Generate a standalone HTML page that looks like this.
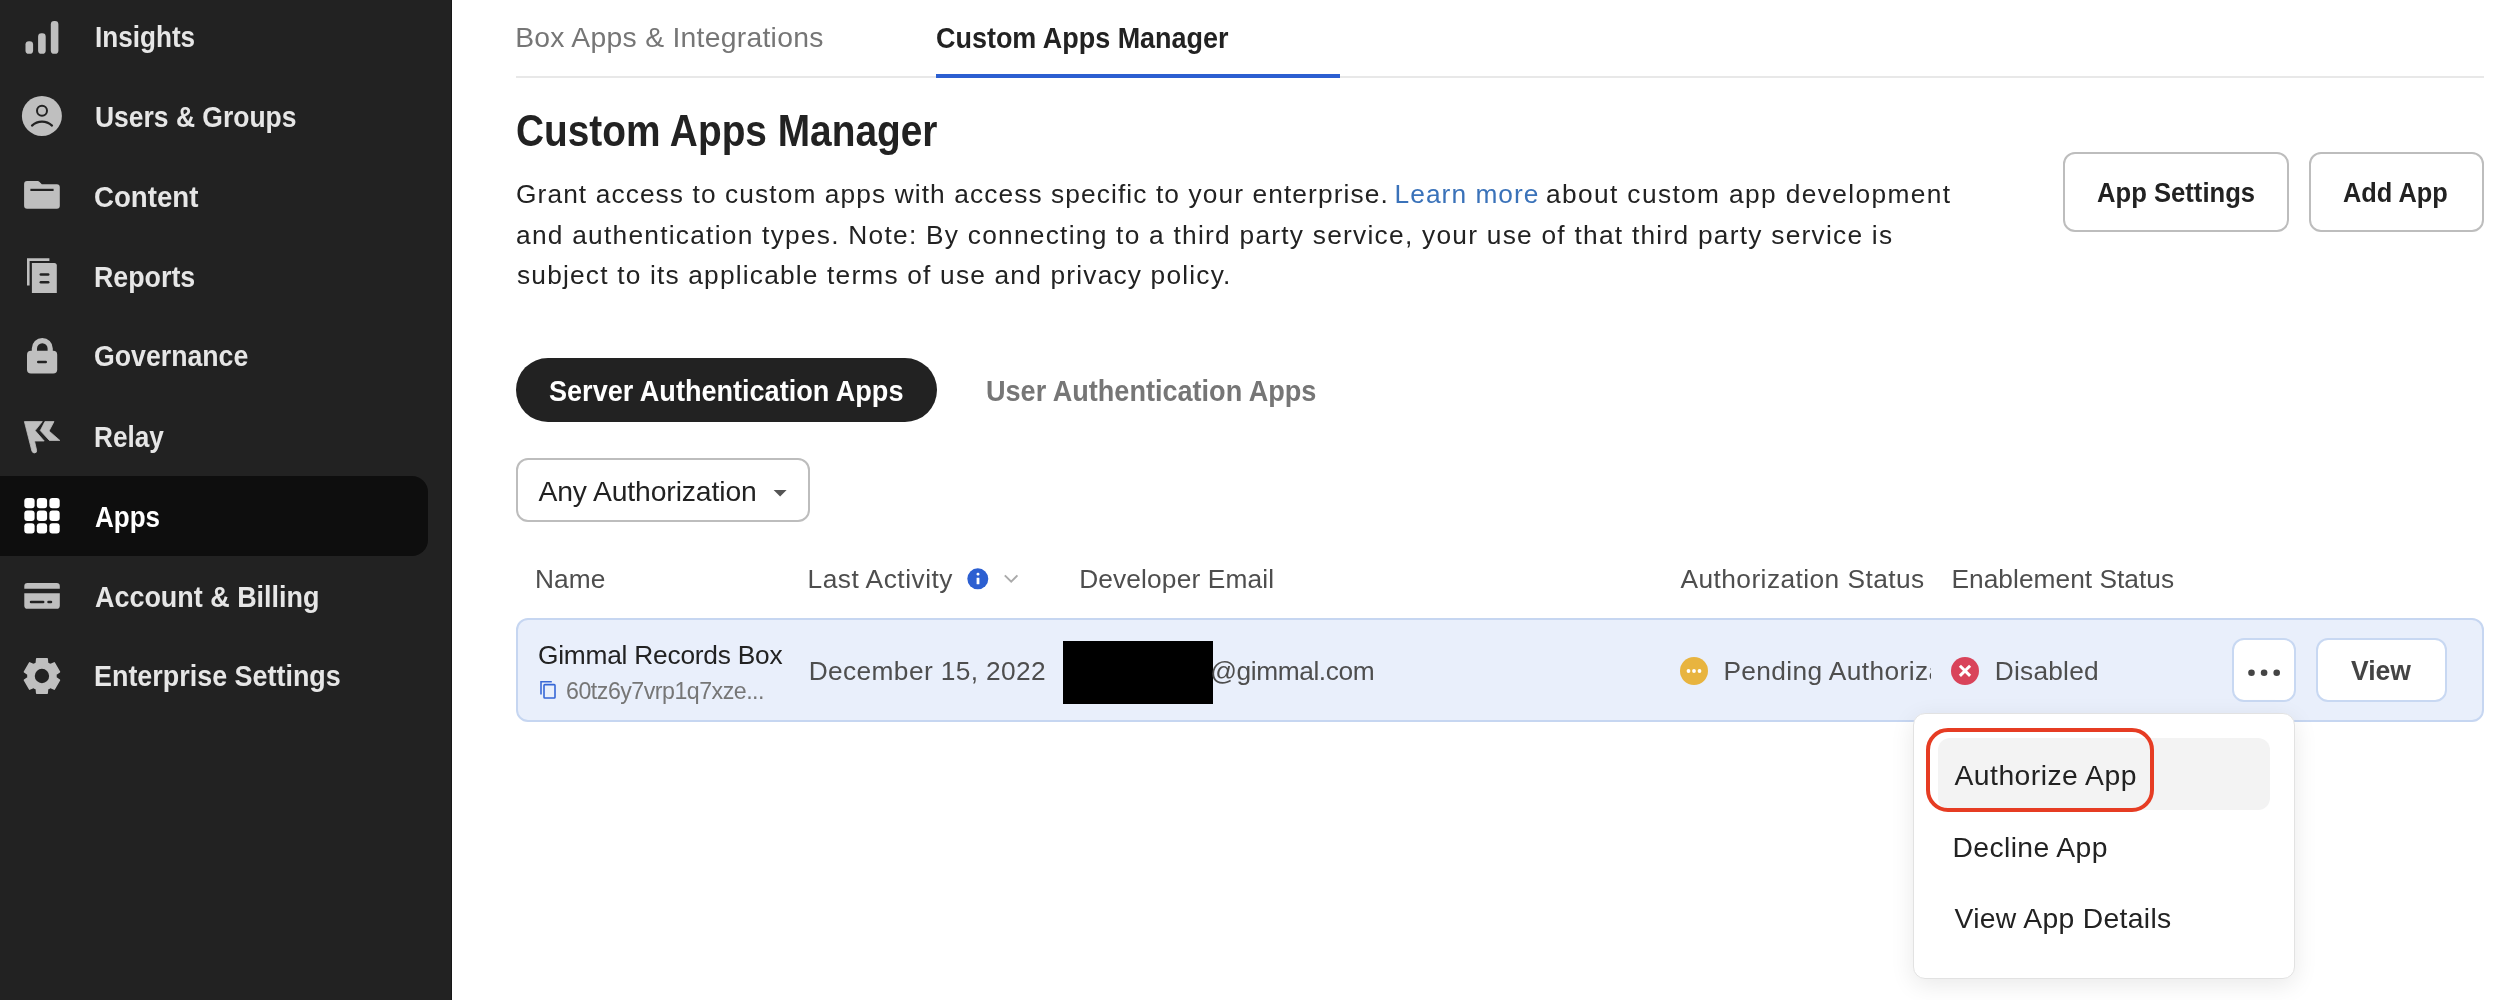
<!DOCTYPE html>
<html><head><meta charset="utf-8">
<style>
html,body{margin:0;padding:0;width:2506px;height:1000px;overflow:hidden;background:#fff;}
body{position:relative;font-family:"Liberation Sans",sans-serif;}
.a{position:absolute;box-sizing:border-box;}
.tx{position:absolute;white-space:nowrap;line-height:1;}
svg{position:absolute;overflow:visible;}
</style></head><body>
<!-- sidebar -->
<div class="a" style="left:0;top:0;width:452px;height:1000px;background:#222222"></div>
<div class="a" style="left:451px;top:0;width:1px;height:1000px;background:#171717"></div>
<div class="a" style="left:0;top:476px;width:428px;height:80px;background:#0e0e0e;border-radius:0 16px 16px 0"></div>
<svg style="left:0;top:0" width="80" height="1000" viewBox="0 0 80 1000">
  <g fill="#bfbfbf">
    <!-- insights -->
    <rect x="25.5" y="41.2" width="7.6" height="12.6" rx="3.4"/>
    <rect x="38.1" y="33.3" width="7.6" height="20.5" rx="3.4"/>
    <rect x="50.8" y="21" width="7.6" height="32.8" rx="3.4"/>
    <!-- users -->
    <circle cx="41.9" cy="115.9" r="20"/>
    <!-- content folder -->
    <path d="M24.1 184 Q24.1 181 27.1 181 L37.5 181 Q38.8 181 39.6 182 L41.8 184.3 L56.8 184.3 Q59.8 184.3 59.8 187.3 L59.8 205.7 Q59.8 208.7 56.8 208.7 L27.1 208.7 Q24.1 208.7 24.1 205.7 Z"/>
    <!-- reports -->
    <path d="M27 258.3 L49.4 258.3 L49.4 261 L29.6 261 L29.6 285.6 L27 285.6 Z"/>
    <path d="M31.9 262.9 L54.3 262.9 Q56.8 262.9 56.8 265.4 L56.8 293.1 L31.9 293.1 Z"/>
    <!-- governance lock -->
    <path d="M31.8 351 L31.8 348.5 A10.5 10.5 0 0 1 52.8 348.5 L52.8 351 L47.6 351 L47.6 348.5 A5.3 5.3 0 0 0 37 348.5 L37 351 Z"/>
    <rect x="27" y="350.8" width="30.2" height="22.7" rx="4"/>
    <!-- relay -->
    <path d="M24.4 421.6 L42.3 421.6 L35.1 430.6 L44.2 441 L34.5 441 L36.6 450.2 Q37 452.9 34.5 452.9 Q32.5 453 31.9 451 Z" stroke="#bfbfbf" stroke-width="0.8" stroke-linejoin="round"/>
    <path d="M44.9 421.6 L54 421.6 L49 431 L59.8 440.4 L49.4 440.4 L40.3 430.6 Z" stroke="#bfbfbf" stroke-width="0.8" stroke-linejoin="round"/>
    <!-- billing card -->
    <path d="M24.3 588.7 L24.3 586 Q24.3 582.9 27.4 582.9 L56.7 582.9 Q59.8 582.9 59.8 586 L59.8 588.7 Z"/>
    <path d="M24.3 593.2 L59.8 593.2 L59.8 605.7 Q59.8 608.8 56.7 608.8 L27.4 608.8 Q24.3 608.8 24.3 605.7 Z"/>
    <!-- gear -->
    <path d="M36.35 663.20 L36.75 658.80 L47.15 658.80 L47.55 663.20 A12.8 12.8 0 0 1 50.24 664.75 L54.25 662.90 L59.45 671.90 L55.84 674.45 A12.8 12.8 0 0 1 55.84 677.55 L59.45 680.10 L54.25 689.10 L50.24 687.25 A12.8 12.8 0 0 1 47.55 688.80 L47.15 693.20 L36.75 693.20 L36.35 688.80 A12.8 12.8 0 0 1 33.66 687.25 L29.65 689.10 L24.45 680.10 L28.06 677.55 A12.8 12.8 0 0 1 28.06 674.45 L24.45 671.90 L29.65 662.90 L33.66 664.75 A12.8 12.8 0 0 1 36.35 663.20 Z" stroke="#bfbfbf" stroke-width="1.6" stroke-linejoin="round"/>
  </g>
  <g fill="none" stroke="#222222" stroke-linecap="round">
    <circle cx="42" cy="110.8" r="5.0" stroke-width="2.0"/>
    <path d="M32 125.6 A14.5 14.5 0 0 1 52 125.6" stroke-width="2.2"/>
    <line x1="30.4" y1="189.9" x2="53.6" y2="189.9" stroke-width="2.2" stroke-linecap="butt"/>
    <line x1="40.8" y1="274.5" x2="48.2" y2="274.5" stroke-width="2.5"/>
    <line x1="40.8" y1="282.3" x2="48.2" y2="282.3" stroke-width="2.5"/>
    <line x1="38.2" y1="362" x2="45.8" y2="362" stroke-width="2.4"/>
    <line x1="31" y1="601.9" x2="43.2" y2="601.9" stroke-width="2.5"/>
    <line x1="48.5" y1="601.9" x2="51" y2="601.9" stroke-width="2.5"/>
  </g>
  <circle cx="41.95" cy="676" r="7.2" fill="#222222"/>
  <g fill="#ffffff">
    <rect x="24.3" y="498" width="10.3" height="10.3" rx="3"/>
    <rect x="36.8" y="498" width="10.3" height="10.3" rx="3"/>
    <rect x="49.4" y="498" width="10.3" height="10.3" rx="3"/>
    <rect x="24.3" y="510.6" width="10.3" height="10.3" rx="3"/>
    <rect x="36.8" y="510.6" width="10.3" height="10.3" rx="3"/>
    <rect x="49.4" y="510.6" width="10.3" height="10.3" rx="3"/>
    <rect x="24.3" y="523.2" width="10.3" height="10.3" rx="3"/>
    <rect x="36.8" y="523.2" width="10.3" height="10.3" rx="3"/>
    <rect x="49.4" y="523.2" width="10.3" height="10.3" rx="3"/>
  </g>
</svg>

<!-- tabs -->
<div class="a" style="left:516px;top:76px;width:1968px;height:2px;background:#e8e8e8"></div>
<div class="a" style="left:936px;top:74px;width:404px;height:4px;background:#2c5fd1"></div>

<!-- header buttons -->
<div class="a" style="left:2063px;top:152px;width:226px;height:80px;border:2px solid #bdbdbd;border-radius:12px"></div>
<div class="a" style="left:2309px;top:152px;width:175px;height:80px;border:2px solid #bdbdbd;border-radius:12px"></div>

<!-- pills -->
<div class="a" style="left:516px;top:358px;width:421px;height:64px;background:#222222;border-radius:32px"></div>

<!-- select -->
<div class="a" style="left:516px;top:458px;width:294px;height:64px;border:2px solid #bdbdbd;border-radius:12px"></div>
<svg style="left:0;top:0" width="10" height="10"><path d="M773.6 490 L786.6 490 L780.1 496.4 Z" fill="#555555"/></svg>

<!-- header info icon & chevron -->
<svg style="left:0;top:0" width="10" height="10">
  <circle cx="977.8" cy="578.8" r="10.5" fill="#2c5fd1"/>
  <rect x="976.6" y="572.8" width="2.8" height="2.6" rx="1.2" fill="#fff"/>
  <rect x="976.6" y="577.8" width="2.8" height="6.4" rx="0.3" fill="#fff"/>
  <path d="M1004.8 575.4 L1011.2 581.6 L1017.4 575.4" fill="none" stroke="#ababab" stroke-width="2"/>
</svg>

<!-- row -->
<div class="a" style="left:516px;top:618px;width:1968px;height:104px;background:#e9effb;border:2px solid #c6d6f1;border-radius:12px"></div>
<svg style="left:0;top:0" width="10" height="10">
  <path d="M541 694.6 L541 681.8 L551.8 681.8" fill="none" stroke="#3a69d6" stroke-width="1.6"/>
  <rect x="544" y="684.6" width="11" height="13.4" fill="none" stroke="#3566d6" stroke-width="1.6" rx="0.8"/>
</svg>
<div class="a" style="left:1063px;top:641px;width:150px;height:63px;background:#000"></div>
<svg style="left:0;top:0" width="10" height="10">
  <circle cx="1694" cy="671" r="14" fill="#e8b43f"/>
  <circle cx="1688.5" cy="671" r="1.9" fill="#fff"/>
  <circle cx="1694" cy="671" r="1.9" fill="#fff"/>
  <circle cx="1699.5" cy="671" r="1.9" fill="#fff"/>
  <circle cx="1965" cy="671" r="14" fill="#d9435a"/>
  <path d="M1959.9 665.7 L1970.1 675.9 M1970.1 665.7 L1959.9 675.9" stroke="#fff" stroke-width="3" stroke-linecap="butt"/>
</svg>
<div class="a" style="left:1700px;top:640px;width:231px;height:60px;overflow:hidden;will-change:transform">
  <div class="tx" style="left:23.4px;top:17.6px;font-size:26.3px;color:#4e4e4e;letter-spacing:0.39px">Pending Authorization</div>
</div>
<div class="a" style="left:2232px;top:638px;width:64px;height:64px;background:#fff;border:2px solid #c8d8f2;border-radius:12px"></div>
<svg style="left:0;top:0" width="10" height="10">
  <circle cx="2251.5" cy="672.8" r="3.3" fill="#444"/>
  <circle cx="2264.1" cy="672.8" r="3.3" fill="#444"/>
  <circle cx="2276.7" cy="672.8" r="3.3" fill="#444"/>
</svg>
<div class="a" style="left:2316px;top:638px;width:131px;height:64px;background:#fff;border:2px solid #c8d8f2;border-radius:12px"></div>

<!-- menu -->
<div class="a" style="left:1913px;top:712.5px;width:381.5px;height:266px;background:#fff;border:1.5px solid #e2e2e2;border-radius:12px;box-shadow:0 6px 24px rgba(0,0,0,0.09)"></div>
<div class="a" style="left:1938px;top:738px;width:332px;height:72px;background:#f3f3f3;border-radius:12px"></div>
<div class="a" style="left:1926px;top:728px;width:228px;height:84px;border:4.8px solid #e63c23;border-radius:22px"></div>

<div style="position:absolute;left:0;top:0;width:2506px;height:1000px;will-change:transform">
<div class="tx" style="left:95.1px;top:23.3px;font-size:29px;font-weight:700;color:#e6e6e6;transform:scaleX(0.9006);transform-origin:0 0;">Insights</div>
<div class="tx" style="left:95.1px;top:103.3px;font-size:29px;font-weight:700;color:#e6e6e6;transform:scaleX(0.9124);transform-origin:0 0;">Users &amp; Groups</div>
<div class="tx" style="left:94.0px;top:183.1px;font-size:29px;font-weight:700;color:#e6e6e6;transform:scaleX(0.9530);transform-origin:0 0;">Content</div>
<div class="tx" style="left:94.1px;top:263.1px;font-size:29px;font-weight:700;color:#e6e6e6;transform:scaleX(0.9237);transform-origin:0 0;">Reports</div>
<div class="tx" style="left:94.1px;top:342.3px;font-size:29px;font-weight:700;color:#e6e6e6;transform:scaleX(0.9204);transform-origin:0 0;">Governance</div>
<div class="tx" style="left:94.1px;top:422.9px;font-size:29px;font-weight:700;color:#e6e6e6;transform:scaleX(0.9022);transform-origin:0 0;">Relay</div>
<div class="tx" style="left:95.0px;top:502.9px;font-size:29px;font-weight:700;color:#ffffff;transform:scaleX(0.8967);transform-origin:0 0;">Apps</div>
<div class="tx" style="left:95.0px;top:582.9px;font-size:29px;font-weight:700;color:#e6e6e6;transform:scaleX(0.9286);transform-origin:0 0;">Account &amp; Billing</div>
<div class="tx" style="left:94.1px;top:661.9px;font-size:29px;font-weight:700;color:#e6e6e6;transform:scaleX(0.9281);transform-origin:0 0;">Enterprise Settings</div>
<div class="tx" style="left:515.2px;top:23.0px;font-size:28.3px;font-weight:400;color:#767676;letter-spacing:0.280px;">Box Apps &amp; Integrations</div>
<div class="tx" style="left:936.0px;top:23.6px;font-size:29px;font-weight:700;color:#222222;transform:scaleX(0.9293);transform-origin:0 0;">Custom Apps Manager</div>
<div class="tx" style="left:516.1px;top:109.8px;font-size:43.5px;font-weight:700;color:#222222;transform:scaleX(0.8926);transform-origin:0 0;">Custom Apps Manager</div>
<div class="tx" style="left:516.0px;top:181.2px;font-size:26.3px;font-weight:400;color:#222222;letter-spacing:1.100px;">Grant access to custom apps with access specific to your enterprise.</div>
<div class="tx" style="left:1394.6px;top:181.2px;font-size:26.3px;font-weight:400;color:#3a72b9;letter-spacing:1.039px;">Learn more</div>
<div class="tx" style="left:1546.0px;top:181.2px;font-size:26.3px;font-weight:400;color:#222222;letter-spacing:1.377px;">about custom app development</div>
<div class="tx" style="left:516.0px;top:222.0px;font-size:26.3px;font-weight:400;color:#222222;letter-spacing:1.255px;">and authentication types. Note: By connecting to a third party service, your use of that third party service is</div>
<div class="tx" style="left:517.0px;top:262.0px;font-size:26.3px;font-weight:400;color:#222222;letter-spacing:1.189px;">subject to its applicable terms of use and privacy policy.</div>
<div class="tx" style="left:2096.7px;top:179.8px;font-size:27px;font-weight:700;color:#222222;transform:scaleX(0.9494);transform-origin:0 0;">App Settings</div>
<div class="tx" style="left:2343.0px;top:179.8px;font-size:27px;font-weight:700;color:#222222;transform:scaleX(0.9395);transform-origin:0 0;">Add App</div>
<div class="tx" style="left:548.6px;top:377.1px;font-size:29px;font-weight:700;color:#ffffff;transform:scaleX(0.9334);transform-origin:0 0;">Server Authentication Apps</div>
<div class="tx" style="left:985.9px;top:376.8px;font-size:29px;font-weight:700;color:#767676;transform:scaleX(0.9334);transform-origin:0 0;">User Authentication Apps</div>
<div class="tx" style="left:538.4px;top:476.9px;font-size:28.3px;font-weight:400;color:#222222;letter-spacing:-0.116px;">Any Authorization</div>
<div class="tx" style="left:535.1px;top:565.9px;font-size:26.3px;font-weight:400;color:#4e4e4e;letter-spacing:0.026px;">Name</div>
<div class="tx" style="left:807.5px;top:565.9px;font-size:26.3px;font-weight:400;color:#4e4e4e;letter-spacing:0.513px;">Last Activity</div>
<div class="tx" style="left:1079.2px;top:565.9px;font-size:26.3px;font-weight:400;color:#4e4e4e;letter-spacing:0.137px;">Developer Email</div>
<div class="tx" style="left:1680.5px;top:565.9px;font-size:26.3px;font-weight:400;color:#4e4e4e;letter-spacing:0.437px;">Authorization Status</div>
<div class="tx" style="left:1951.5px;top:565.9px;font-size:26.3px;font-weight:400;color:#4e4e4e;letter-spacing:0.028px;">Enablement Status</div>
<div class="tx" style="left:538.0px;top:641.7px;font-size:26.3px;font-weight:400;color:#222222;letter-spacing:-0.222px;">Gimmal Records Box</div>
<div class="tx" style="left:566.1px;top:680.4px;font-size:23.2px;font-weight:400;color:#767676;letter-spacing:-0.510px;">60tz6y7vrp1q7xze...</div>
<div class="tx" style="left:808.7px;top:657.7px;font-size:26.3px;font-weight:400;color:#4e4e4e;letter-spacing:0.378px;">December 15, 2022</div>
<div class="tx" style="left:1210.3px;top:657.7px;font-size:26.3px;font-weight:400;color:#4e4e4e;letter-spacing:-0.412px;">@gimmal.com</div>
<div class="tx" style="left:1994.8px;top:657.7px;font-size:26.3px;font-weight:400;color:#4e4e4e;letter-spacing:0.214px;">Disabled</div>
<div class="tx" style="left:2350.5px;top:657.7px;font-size:27px;font-weight:700;color:#444444;transform:scaleX(0.9816);transform-origin:0 0;">View</div>
<div class="tx" style="left:1954.5px;top:760.9px;font-size:28.3px;font-weight:400;color:#222222;letter-spacing:0.474px;">Authorize App</div>
<div class="tx" style="left:1952.5px;top:832.5px;font-size:28.3px;font-weight:400;color:#222222;letter-spacing:0.386px;">Decline App</div>
<div class="tx" style="left:1954.5px;top:904.1px;font-size:28.3px;font-weight:400;color:#222222;letter-spacing:0.324px;">View App Details</div>
</div>
</body></html>
